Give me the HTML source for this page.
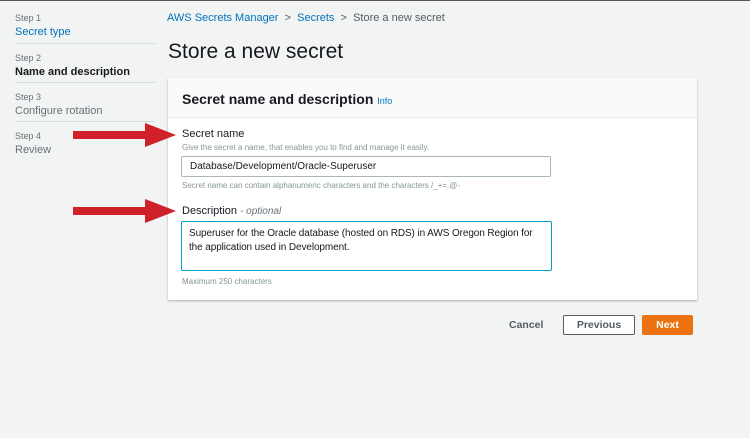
<!DOCTYPE html>
<html><head><style>
*{margin:0;padding:0;box-sizing:border-box}
body{width:750px;height:438px;background:#f2f3f3;font-family:"Liberation Sans",sans-serif;position:relative;overflow:hidden;color:#16191f}
.a{position:absolute;white-space:nowrap}
.step{font-size:9px;color:#687078}
.sl{font-size:11px}
.hr{position:absolute;left:15px;width:140px;height:1px;background:#d5dbdb}
.card{position:absolute;left:168px;top:78px;width:529px;height:222px;background:#fff;box-shadow:0 1px 2px rgba(0,28,36,.3)}
.ch{position:absolute;left:0;top:0;width:100%;height:40px;background:#fafafa;border-bottom:1px solid #eaeded}
</style></head><body>
<div style="position:absolute;left:0;top:0;width:750px;height:1px;background:#555"></div>
<div class="a step" style="left:15px;top:13px">Step 1</div>
<div class="a sl" style="left:15px;top:26px;color:#0073bb">Secret type</div>
<div class="hr" style="top:43px"></div>
<div class="a step" style="left:15px;top:53px">Step 2</div>
<div class="a sl" style="left:15px;top:66px;font-weight:bold">Name and description</div>
<div class="hr" style="top:82px"></div>
<div class="a step" style="left:15px;top:92px">Step 3</div>
<div class="a sl" style="left:15px;top:105px;color:#687078">Configure rotation</div>
<div class="hr" style="top:121px"></div>
<div class="a step" style="left:15px;top:131px">Step 4</div>
<div class="a sl" style="left:15px;top:144px;color:#687078">Review</div>

<div class="a" style="left:167px;top:12px;font-size:11px;color:#545b64"><span style="color:#0073bb">AWS Secrets Manager</span> &nbsp;&gt;&nbsp; <span style="color:#0073bb">Secrets</span> &nbsp;&gt;&nbsp; Store a new secret</div>
<div class="a" style="left:168px;top:40px;font-size:21px">Store a new secret</div>

<div class="card"><div class="ch"></div>
<div class="a" style="left:14px;top:13px;font-size:14px;font-weight:bold">Secret name and description <span style="font-size:9px;color:#0073bb;font-weight:normal">Info</span></div>
<div class="a" style="left:14px;top:50px;font-size:11px">Secret name</div>
<div class="a" style="left:14px;top:65px;font-size:8px;color:#879596">Give the secret a name, that enables you to find and manage it easily.</div>
<div style="position:absolute;left:13px;top:78px;width:370px;height:21px;border:1px solid #aab7b8;border-radius:2px"></div>
<div class="a" style="left:22px;top:83px;font-size:10px">Database/Development/Oracle-Superuser</div>
<div class="a" style="left:14px;top:103px;font-size:8px;color:#879596">Secret name can contain alphanumeric characters and the characters /_+=.@-</div>
<div class="a" style="left:14px;top:127px;font-size:11px">Description <span style="color:#687078;font-style:italic;font-size:10px">- optional</span></div>
<div style="position:absolute;left:13px;top:143px;width:371px;height:50px;border:1px solid #00a1c9;border-radius:2px"></div>
<div class="a" style="left:21px;top:149px;font-size:10px;line-height:14px;letter-spacing:-0.1px">Superuser for the Oracle database (hosted on RDS) in AWS Oregon Region for<br>the application used in Development.</div>
<div class="a" style="left:14px;top:199px;font-size:8px;color:#879596">Maximum 250 characters</div>
</div>

<div class="a" style="left:509px;top:319px;font-size:10.5px;font-weight:bold;color:#545b64">Cancel</div>
<div style="position:absolute;left:563px;top:315px;width:72px;height:20px;border:1px solid #545b64;border-radius:2px;background:#fff;font-size:10.5px;font-weight:bold;color:#545b64;text-align:center;line-height:18px">Previous</div>
<div style="position:absolute;left:642px;top:315px;width:51px;height:20px;background:#ec7211;border-radius:2px;font-size:10.5px;font-weight:bold;color:#fff;text-align:center;line-height:20px">Next</div>

<svg style="position:absolute;left:0;top:0" width="750" height="438">
<g fill="#d0202a">
<rect x="73" y="131" width="75" height="8"/><polygon points="145,123 176,135 145,147"/>
<rect x="73" y="207" width="75" height="8"/><polygon points="145,199 176,211 145,223"/>
</g></svg>
</body></html>
